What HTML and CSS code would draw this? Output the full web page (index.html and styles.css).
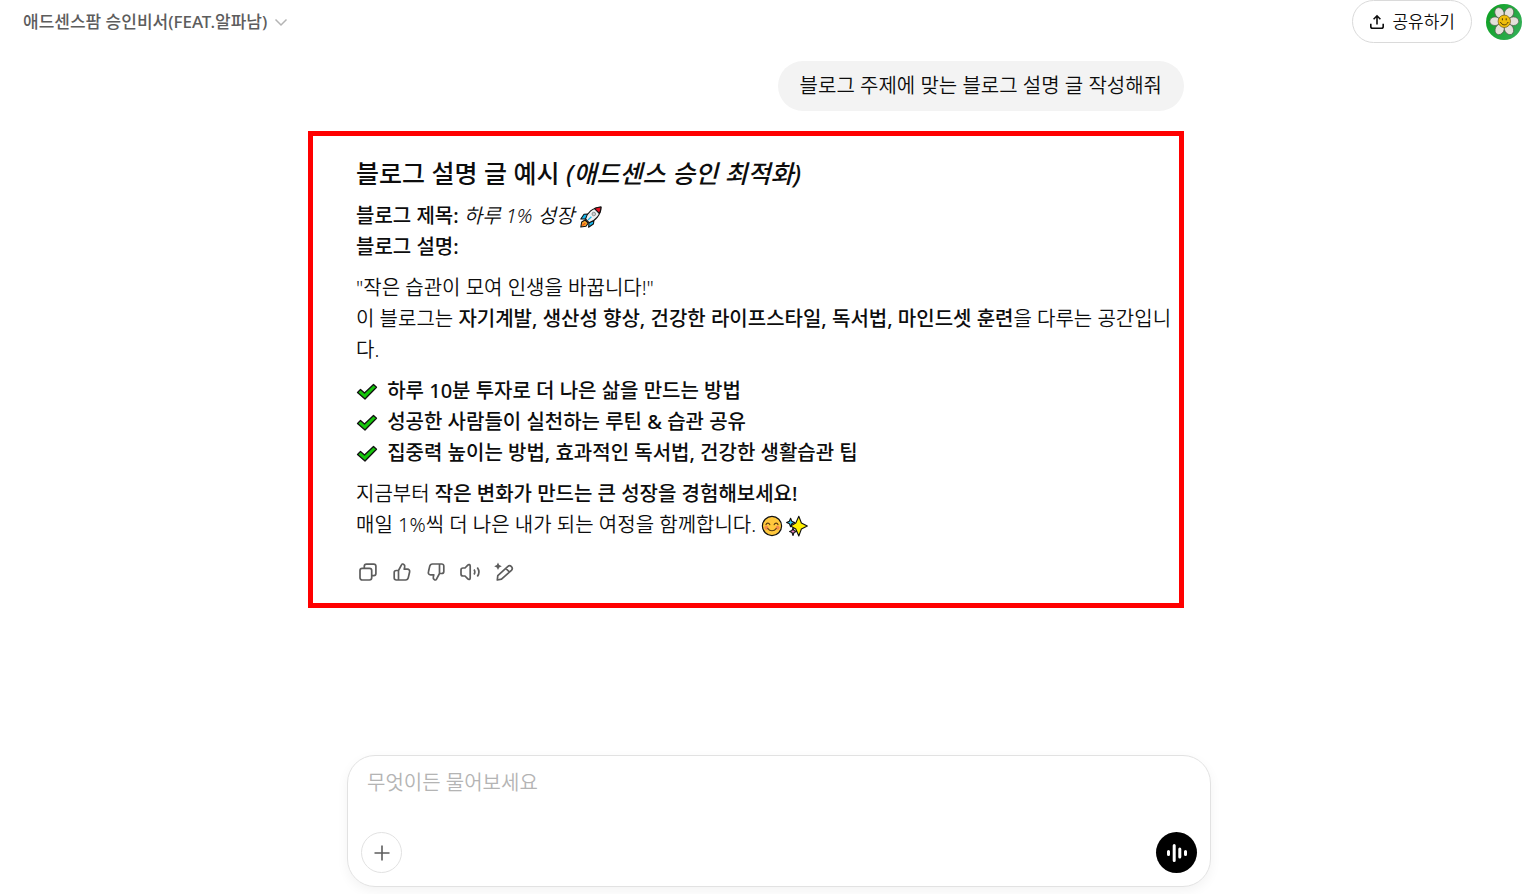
FILE: index.html
```html
<!DOCTYPE html>
<html lang="ko">
<head>
  <meta charset="utf-8">
  <meta name="viewport" content="width=device-width, initial-scale=1">
  <title>애드센스팜 승인비서</title>
  <link rel="stylesheet" href="styles.css">
</head>

<body>

<!-- shared drawings -->
<svg class="defs" aria-hidden="true">
  <symbol id="check" viewBox="0 0 22 22">
    <path d="M1.5 11.5 L4.5 8.5 L8.5 12 L17.5 3.5 L20.5 6.2 L9 18 Z" fill="#16c60c" stroke="#111" stroke-width="1.3" stroke-linejoin="round"/>
  </symbol>
  <symbol id="thumb" viewBox="0 0 20 20">
    <path d="M6.5 8.5 L9.5 2.8 C9.8 2 10.8 1.8 11.5 2.2 C12.6 2.8 13 3.8 12.7 5 L12.2 7.2 H15.4 C17 7.2 18 8.5 17.6 10 L16.3 15.6 C16 17 15 18 13.5 18 H4.3 C3 18 2.2 17.2 2.2 16 V10.5 C2.2 9.3 3 8.5 4.3 8.5 Z M6.5 8.5 V18"/>
  </symbol>
</svg>

<header class="topbar">
  <button class="model" type="button">
    애드센스팜 승인비서(FEAT.알파남)
    <svg width="14" height="14" viewBox="0 0 14 14"><path d="M1.5 4.5 L7 10 L12.5 4.5" fill="none" stroke="#b4b4b4" stroke-width="1.5"/></svg>
  </button>
  <div class="account">
    <button class="share" type="button">
      <svg width="16" height="16" viewBox="0 0 16 16"><path d="M8 10.5 V2 M4.6 5.2 L8 1.8 L11.4 5.2 M1.8 9.8 V12.5 C1.8 13.7 2.4 14.3 3.6 14.3 H12.4 C13.6 14.3 14.2 13.7 14.2 12.5 V9.8" fill="none" stroke="#0d0d0d" stroke-width="1.6"/></svg>
      공유하기
    </button>
    <button class="avatar" type="button" aria-label="프로필">
      <svg width="36" height="36" viewBox="0 0 36 36">
        <defs>
          <linearGradient id="green" x1="0" y1="0" x2="1" y2="0.5">
            <stop offset="0" stop-color="#0ba01e"/>
            <stop offset="1" stop-color="#2fad52"/>
          </linearGradient>
        </defs>
        <circle cx="18" cy="18" r="18" fill="url(#green)"/>
        <g fill="#e4e0da" stroke="#555d50" stroke-width="0.7">
          <ellipse cx="13.5" cy="9" rx="4.5" ry="5.6" transform="rotate(-28 13.5 9)"/>
          <ellipse cx="23" cy="9" rx="4.5" ry="5.6" transform="rotate(28 23 9)"/>
          <ellipse cx="9" cy="17.2" rx="5.2" ry="4.3"/>
          <ellipse cx="27.5" cy="17.2" rx="5.2" ry="4.3"/>
          <ellipse cx="13.7" cy="25.3" rx="4.4" ry="5.6" transform="rotate(28 13.7 25.3)"/>
          <ellipse cx="23" cy="25.3" rx="4.4" ry="5.6" transform="rotate(-28 23 25.3)"/>
        </g>
        <circle cx="18.3" cy="17.3" r="6.2" fill="#efbd0b" stroke="#6b5a14" stroke-width="0.7"/>
        <path d="M14.4 18 C16 21.8 20.6 21.8 22.2 18 M16.4 14.3 V16.3 M20.2 14.3 V16.3" fill="none" stroke="#4d3b08" stroke-width="1"/>
      </svg>
    </button>
  </div>
</header>

<main class="thread">
  <div class="bubble">블로그 주제에 맞는 블로그 설명 글 작성해줘</div>

  <article class="answer">
    <h1>블로그 설명 글 예시 <em>(애드센스 승인 최적화)</em></h1>

    <p>
      <strong>블로그 제목:</strong> <em>하루 1% 성장</em>
      <svg class="emoji" viewBox="0 0 22 22" role="img" aria-label="로켓">
        <g stroke="#111" stroke-width="1.1" stroke-linejoin="round">
          <path d="M5 14 L1.7 16 L0.8 21 L6 20.2 L8.3 17 Z" fill="#f7a52b"/>
          <path d="M8 8 L4 8.3 L0.8 13 L6 13 Z M14 14.2 L13.4 18 L8.6 21.2 L9 16.6 Z" fill="#16b9ef"/>
          <path d="M5.5 13 C7 7 12.5 1.5 21 1 C20.7 9 15.5 15 9 16.7 Z" fill="#edf0f2"/>
          <path d="M14.5 2.6 C16.5 1.6 19 1 21 1 C21 3 20.5 5.5 19.4 7.5 Z" fill="#e81224"/>
        </g>
        <circle cx="13.8" cy="8" r="1.8" fill="#c9cdd0" stroke="#777" stroke-width="0.7"/>
        <path d="M8 14 L11.4 10.7" stroke="#16b9ef" stroke-width="1.2"/>
        <path d="M2.3 19.4 L5.3 17.2" stroke="#e85112" stroke-width="1.3"/>
      </svg><br>
      <strong>블로그 설명:</strong>
    </p>

    <p>
      "작은 습관이 모여 인생을 바꿉니다!"<br>
      이 블로그는 <strong>자기계발, 생산성 향상, 건강한 라이프스타일, 독서법, 마인드셋 훈련</strong>을 다루는 공간입니다.
    </p>

    <p>
      <svg class="emoji check"><use href="#check"/></svg> <strong>하루 10분 투자로 더 나은 삶을 만드는 방법</strong><br>
      <svg class="emoji check"><use href="#check"/></svg> <strong>성공한 사람들이 실천하는 루틴 &amp; 습관 공유</strong><br>
      <svg class="emoji check"><use href="#check"/></svg> <strong>집중력 높이는 방법, 효과적인 독서법, 건강한 생활습관 팁</strong>
    </p>

    <p>
      지금부터 <strong>작은 변화가 만드는 큰 성장을 경험해보세요!</strong><br>
      매일 1%씩 더 나은 내가 되는 여정을 함께합니다.
      <span class="pair"><svg class="emoji" viewBox="0 0 22 22" role="img" aria-label="미소">
        <circle cx="11" cy="11" r="9.6" fill="#ffc83d" stroke="#111" stroke-width="1.2"/>
        <circle cx="5.4" cy="12.7" r="2" fill="#f58a4b"/>
        <circle cx="16.6" cy="12.7" r="2" fill="#f58a4b"/>
        <path d="M5 9.6 C5.6 7.6 8 7.6 8.8 9.6 M13.2 9.6 C14 7.6 16.4 7.6 17 9.6 M6.8 13.5 C8.8 16.5 13.2 16.5 15.2 13.5" fill="none" stroke="#5b3b12" stroke-width="1.2" stroke-linecap="round"/>
      </svg><svg class="emoji" viewBox="0 0 22 22" role="img" aria-label="반짝임">
        <g stroke="#111" stroke-width="1.1" stroke-linejoin="round">
          <path d="M12.8 1.2 L15.4 8 L21.3 11 L15.4 14 L12.8 21 L9.8 14 L4.5 11 L9.8 8 Z" fill="#fff100"/>
          <path d="M4.6 3.2 L5.8 6.2 L8.7 7.4 L5.8 8.7 L4.6 11.8 L3.4 8.7 L0.6 7.4 L3.4 6.2 Z" fill="#35c8f5"/>
          <path d="M7 13 L8 15.5 L10.4 16.5 L8 17.5 L7 20.5 L6 17.5 L3.6 16.5 L6 15.5 Z" fill="#f28ac6"/>
        </g>
      </svg></span>
    </p>

    <div class="actions">
      <button type="button" aria-label="복사"><svg viewBox="0 0 20 20"><rect x="2" y="6.3" width="11.7" height="11.7" rx="2.2"/><path d="M6.3 6.3 V4.3 C6.3 3 7.2 2.1 8.5 2.1 H15.7 C17 2.1 17.9 3 17.9 4.3 V11.5 C17.9 12.8 17 13.7 15.7 13.7 H13.7"/></svg></button>
      <button type="button" aria-label="좋아요"><svg><use href="#thumb"/></svg></button>
      <button type="button" aria-label="싫어요"><svg class="down"><use href="#thumb"/></svg></button>
      <button type="button" aria-label="소리내어 읽기"><svg viewBox="0 0 20 20"><path d="M10.2 4.1 V15.9 C10.2 17.4 8.8 17.9 7.8 16.9 L5 14 H3 C1.5 14 1 13.3 1 12 V8 C1 6.7 1.5 6 3 6 H5 L7.8 3.1 C8.8 2.1 10.2 2.6 10.2 4.1 Z M14 7.5 C15 9 15 11 14 12.5 M17.3 5.4 C19.3 8.2 19.3 11.8 17.3 14.6"/></svg></button>
      <button type="button" aria-label="편집"><svg viewBox="0 0 20 20"><path d="M3.3 18 L3.8 13.7 L13.7 4.6 C15 3.4 16.2 3.4 17.4 4.6 C18.6 5.8 18.6 7 17.4 8.3 L7.5 17.2 Z M11.8 6.4 L15.6 10.2"/><path class="solid" d="M4 0.4 L5.2 3 L7.8 4.2 L5.2 5.4 L4 8 L2.8 5.4 L0.2 4.2 L2.8 3 Z"/></svg></button>
    </div>
  </article>
</main>

<footer class="dock">
  <form class="composer">
    <textarea rows="1" aria-label="메시지" placeholder="무엇이든 물어보세요"></textarea>
    <div class="tools">
      <button class="add" type="button" aria-label="추가"><svg width="20" height="20" viewBox="0 0 20 20"><path d="M10 2.5 V17.5 M2.5 10 H17.5" stroke="#5d5d5d" stroke-width="1.6"/></svg></button>
      <button class="voice" type="button" aria-label="음성 모드"><svg width="22" height="22" viewBox="0 0 22 22"><path d="M2.5 9.5 V12.5 M8.2 3.5 V18.5 M13.8 7 V15 M19.5 9.5 V12.5" stroke="#fff" stroke-width="3" stroke-linecap="round"/></svg></button>
    </div>
  </form>
</footer>

</body>
</html>
```
FILE: styles.css
```css
* {
  box-sizing: border-box;
}

body {
  margin: 0;
  min-height: 100vh;
  display: flex;
  flex-direction: column;
  background-color: #fff;
  color: #0d0d0d;
  font-family: "Noto Sans", "Noto Sans CJK KR", sans-serif;
  font-size: 20px;
  font-weight: 350;
  line-height: 31px;
}

button,
textarea {
  font: inherit;
  color: inherit;
  border: 0;
  padding: 0;
  background: none;
}

button {
  display: flex;
  align-items: center;
  justify-content: center;
  cursor: pointer;
}

strong {
  font-weight: 500;
}

.defs {
  display: none;
}

/* top bar */
.topbar {
  display: flex;
  justify-content: space-between;
  align-items: center;
  padding: 0 5px 0 23px;
}

.model {
  gap: 7px;
  font-size: 17px;
  font-weight: 500;
  color: #5d5d5d;
}

.account {
  display: flex;
  align-items: center;
  gap: 14px;
}

.share {
  height: 43px;
  padding: 0 16px;
  gap: 7px;
  border: 1px solid #dadada;
  border-radius: 22px;
  font-size: 17px;
}

.avatar {
  border-radius: 50%;
}

/* conversation */
.thread {
  display: flex;
  flex-direction: column;
  align-items: flex-end;
  gap: 20px;
  width: 100%;
  max-width: 911px;
  margin: 0 auto;
  padding: 18px 35px 40px 0;
}

.bubble {
  padding: 9px 22px 10px;
  border-radius: 25px;
  background-color: #f3f3f3;
}

.answer {
  width: 100%;
  padding: 20px 6px 21px 43px;
  border: 5px solid #f00;
}

.answer h1 {
  margin: 0 0 10px;
  font-size: 25px;
  font-weight: 500;
  line-height: 34px;
}

.answer p {
  margin: 0 0 10px;
}

.emoji {
  width: 22px;
  height: 22px;
  vertical-align: -5px;
}

.check {
  margin-right: 4px;
}

.pair {
  display: inline-flex;
  gap: 3px;
  vertical-align: -5px;
}

.actions {
  display: flex;
  gap: 14px;
  padding: 12px 0 0 2px;
}

.actions svg {
  width: 20px;
  height: 20px;
  fill: none;
  stroke: #5d5d5d;
  stroke-width: 1.7;
  stroke-linejoin: round;
}

.actions .down {
  transform: rotate(180deg);
}

.actions .solid {
  fill: #5d5d5d;
  stroke: none;
}

/* message box */
.dock {
  margin-top: auto;
  padding: 0 0 7px 31px;
}

.composer {
  max-width: 864px;
  margin: 0 auto;
  padding: 11px 13px 13px;
  display: flex;
  flex-direction: column;
  gap: 34px;
  border: 1px solid #e2e2e2;
  border-radius: 28px;
  box-shadow: 0 4px 12px rgba(0, 0, 0, 0.05);
}

.composer textarea {
  height: 31px;
  padding: 0 6px;
  resize: none;
  outline: none;
  overflow: hidden;
}

.composer textarea::placeholder {
  color: #b4b4b4;
}

.tools {
  display: flex;
  justify-content: space-between;
}

.add,
.voice {
  width: 41px;
  height: 41px;
  border-radius: 50%;
}

.add {
  border: 1px solid #e2e2e2;
}

.voice {
  background-color: #000;
}
```
